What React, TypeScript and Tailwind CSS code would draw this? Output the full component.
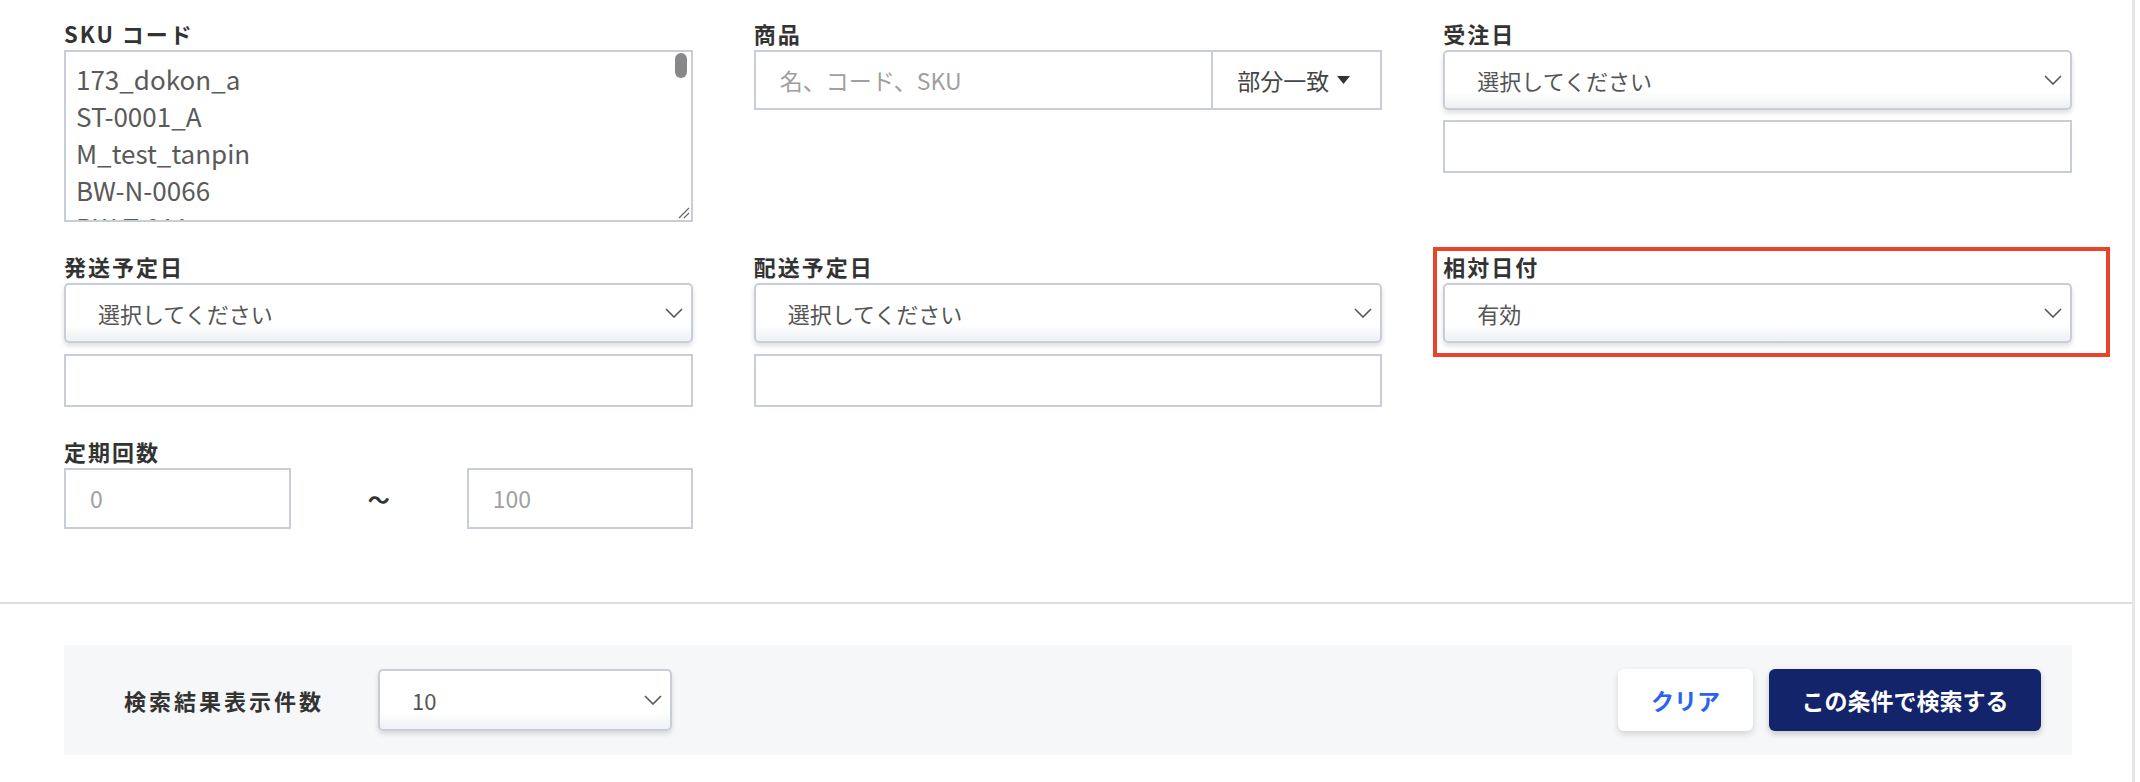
import React from "react";

// =============== Shared pieces ===============
const BORDER = "border-2 border-[#c9cdd9]";

const Chevron = () => (
  <svg width="18" height="10" viewBox="0 0 18 10" fill="none" className="shrink-0">
    <path d="M1 1 L9 9 L17 1" stroke="#555" strokeWidth="1.6" />
  </svg>
);

const Label = ({ children }: { children: React.ReactNode }) => (
  <div className="mb-[2px] text-[22px] font-bold leading-[30px] tracking-[2px] text-[#333]">{children}</div>
);

const Select = ({ value, className = "" }: { value: string; className?: string }) => (
  <div
    className={`flex items-center justify-between rounded-[5px] ${BORDER} bg-[linear-gradient(to_bottom,#ffffff_72%,#eef0f4)] pl-[32px] pr-[8px] text-[22px] text-[#555] shadow-[0_3px_5px_rgba(0,0,0,0.13)] ${className}`}
  >
    <span>{value}</span>
    <Chevron />
  </div>
);

const TextBox = ({ placeholder, className = "" }: { placeholder?: string; className?: string }) => (
  <div className={`flex items-center bg-white ${BORDER} pl-[24px] text-[23px] text-[#a0a0a0] ${className}`}>
    {placeholder}
  </div>
);

// SKU codes shown in the textarea
const skuLines = ["173_dokon_a", "ST-0001_A", "M_test_tanpin", "BW-N-0066", "BW-T-011"];

export default function App() {
  return (
    <div className="flex min-h-[782px] bg-white font-['Noto_Sans_CJK_JP',sans-serif]">
      <div className="w-[2135px] border-r-[3px] border-[#e4e6eb]">
        {/* =============== Search form =============== */}
        <section className="grid grid-cols-3 gap-x-[61px] gap-y-[29px] pb-[73px] pl-[64px] pr-[60px] pt-[18px]">
          {/* SKU code */}
          <div>
            <Label>SKU コード</Label>
            <div className={`relative h-[172px] overflow-hidden ${BORDER} pl-[10px] pt-[8px] text-[26px] leading-[37px] text-[#5a5a5a]`}>
              {skuLines.map((l) => (
                <div key={l}>{l}</div>
              ))}
              {/* scrollbar thumb */}
              <div className="absolute right-[4px] top-[1px] h-[25px] w-[12px] rounded-full bg-[#888]" />
              {/* resize grip */}
              <svg className="absolute bottom-[1px] right-[1px]" width="14" height="14" viewBox="0 0 14 14">
                <path d="M13 3 L3 13 M13 8 L8 13" stroke="#666" strokeWidth="1.2" />
              </svg>
            </div>
          </div>

          {/* Product */}
          <div>
            <Label>商品</Label>
            <div className={`flex h-[60px] ${BORDER} text-[23px]`}>
              <div className="flex flex-1 items-center pl-[24px] text-[#a0a0a0]">名、コード、SKU</div>
              <div className="flex w-[169px] items-center gap-[8px] border-l-2 border-[#c9cdd9] pl-[24px] text-[#444]">
                部分一致
                <svg width="13" height="8" viewBox="0 0 13 8">
                  <path d="M0 0 H13 L6.5 8 Z" fill="#333" />
                </svg>
              </div>
            </div>
          </div>

          {/* Order date */}
          <div>
            <Label>受注日</Label>
            <Select value="選択してください" className="h-[60px]" />
            <TextBox className="mt-[10px] h-[53px]" />
          </div>

          {/* Shipping date */}
          <div>
            <Label>発送予定日</Label>
            <Select value="選択してください" className="h-[60px]" />
            <TextBox className="mt-[11px] h-[53px]" />
          </div>

          {/* Delivery date */}
          <div>
            <Label>配送予定日</Label>
            <Select value="選択してください" className="h-[60px]" />
            <TextBox className="mt-[11px] h-[53px]" />
          </div>

          {/* Relative date, highlighted */}
          <div className="relative self-start">
            <Label>相対日付</Label>
            <Select value="有効" className="h-[60px]" />
            <div className="pointer-events-none absolute -left-[10px] -right-[38px] -top-[4px] h-[110px] border-4 border-[#e8442b]" />
          </div>

          {/* Subscription count */}
          <div>
            <Label>定期回数</Label>
            <div className="flex items-center">
              <TextBox placeholder="0" className="h-[61px] w-[227px]" />
              <div className="flex-1 text-center text-[22px] font-bold text-[#333]">〜</div>
              <TextBox placeholder="100" className="h-[61px] w-[226px]" />
            </div>
          </div>
        </section>

        <div className="h-[2px] bg-[#dddddd]" />

        {/* =============== Footer panel =============== */}
        <div className="ml-[64px] mt-[41px] flex h-[110px] w-[2008px] items-center bg-[#f6f7f9] pl-[60px] pr-[31px]">
          <div className="w-[254px] text-[22px] font-bold tracking-[3px] text-[#333]">検索結果表示件数</div>
          <Select value="10" className="h-[62px] w-[294px]" />
          <button className="ml-auto h-[62px] w-[135px] rounded-[6px] bg-white text-[23px] font-bold text-[#2b63f0] shadow-[0_3px_6px_rgba(0,0,0,0.15)]">
            クリア
          </button>
          <button className="ml-[16px] h-[62px] w-[272px] rounded-[6px] bg-[#13246a] text-[23px] font-bold text-white shadow-[0_3px_6px_rgba(0,0,0,0.2)]">
            この条件で検索する
          </button>
        </div>
      </div>
    </div>
  );
}
